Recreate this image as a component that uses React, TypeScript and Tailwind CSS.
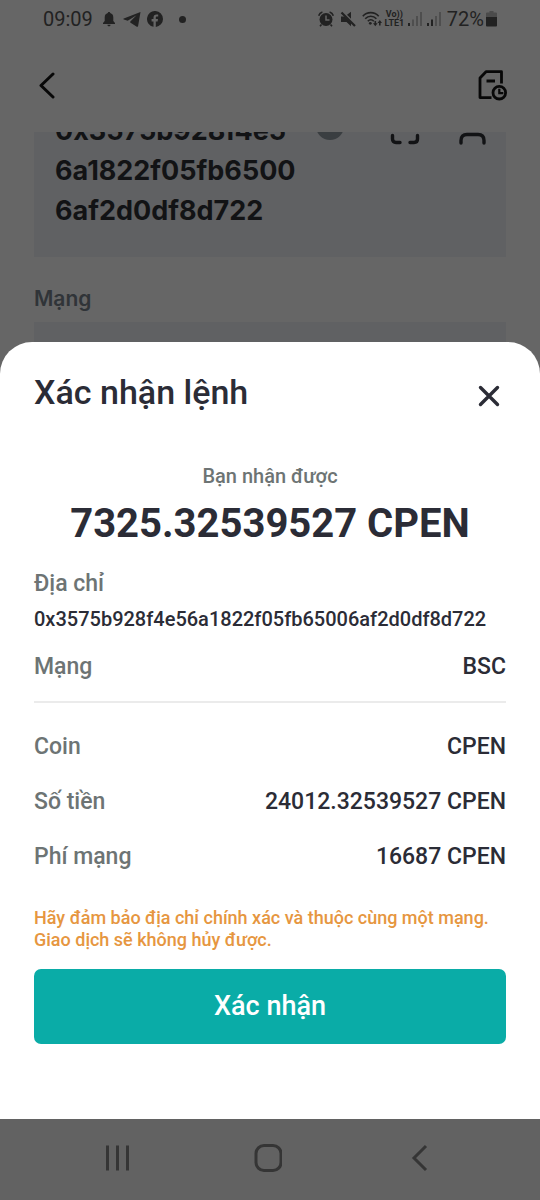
const details = [
  { label: 'Coin', value: 'CPEN' },
  { label: 'Số tiền', value: '24012.32539527 CPEN' },
  { label: 'Phí mạng', value: '16687 CPEN' },
];

function StatusBar() {
  return (
    <div className="flex h-[38px] items-center justify-between px-[43px] text-[#222222]">
      <div className="flex items-center">
        <span className="text-[20px] leading-6">09:09</span>
        <svg className="ml-2.5 h-4 w-3" viewBox="0 0 12 16" fill="currentColor">
          <path d="M6 1c.8 0 1.2.5 1.2 1.1C9.300 2.700 10.300 4.300 10.300 6.500V10L12 12v.9H0V12l1.700-2V6.500c0-2.200 1-3.800 3.100-4.400C4.800 1.500 5.200 1 6 1zM4.500 13.700h3C7.500 14.700 6.900 15.200 6 15.200s-1.500-.5-1.500-1.500z" />
        </svg>
        <svg className="ml-2 h-4 w-[18px]" viewBox="0 0 18 16" fill="currentColor">
          <path d="M17.500 1 .8 7.400c-.7.3-.6 1 .1 1.200l3.800 1.100L13.500 4.300 7.300 10.600l-.1.900 6.200 4.100c.9.500 1.500.2 1.700-.7L17.500 1z" />
        </svg>
        <svg className="ml-1.5 h-4 w-4" viewBox="0 0 16 16" fill="currentColor">
          <path d="M16 8A8 8 0 1 0 6.500 15.850V10.500H4.600V8.100h1.900V6.600c0-2.100 1.200-3.200 3-3.200.7 0 1.500.1 1.700.2v2H10c-.9 0-1.200.5-1.200 1.200v1.300h2.200l-.4 2.400H8.800v5.450A8 8 0 0 0 16 8z" />
        </svg>
        <span className="ml-4 h-[7px] w-[7px] rounded-full bg-[#222222]" />
      </div>

      <div className="flex items-center">
        <svg className="h-4 w-4" viewBox="0 0 16 16" fill="none" stroke="currentColor">
          <circle cx="8" cy="8.500" r="6.500" fill="currentColor" stroke="none" />
          <path d="M.7 4.800C1.200 3 2.500 1.500 4.400 1M15.300 4.800C14.800 3 13.500 1.500 11.600 1M3.500 13.500 2 15.300M12.500 13.500 14 15.300" strokeWidth="1.600" />
          <path d="M8 4.500V9h3.500" stroke="#666666" strokeWidth="1.500" />
        </svg>
        <svg className="ml-1.5 h-4 w-4" viewBox="0 0 16 16" fill="currentColor">
          <path d="M1 5.500h3.500L11 12v3.300L6.500 11H1zM7 3.800 11 .8v7z" />
          <path d="M1.500 1.500 15 15" stroke="currentColor" strokeWidth="2.200" />
        </svg>
        <svg className="ml-1.5 h-4 w-5" viewBox="0 0 20 16" fill="none" stroke="currentColor" strokeWidth="1.600">
          <path d="M.8 5.200C5 .4 12.500.4 16.700 5.200M3.200 7.800c3.200-3.500 8-3.500 11.200 0M5.800 10.200c1.800-1.900 4.200-1.900 6 0" />
          <circle cx="8.300" cy="12.300" r="1.400" fill="currentColor" stroke="none" />
          <path d="M13.300 10v3M17.800 14.500v-3" />
          <path d="M11 12.300h4.600L13.300 15.300zM15.500 12h4.500l-2.200-3z" fill="currentColor" stroke="none" />
        </svg>
        <span className="ml-0.5 flex w-[21px] flex-col items-center text-[9px] font-bold leading-[9px]">
          <span>Vo))</span>
          <span>LTE1</span>
        </span>
        <svg className="ml-[3px] h-4 w-3.5" viewBox="0 0 14 16" fill="currentColor">
          <path d="M0 12h2v3H0z" />
          <path d="M4 8.500h2V15H4zM8 5h2v10H8zM12 1h2v14h-2z" opacity=".35" />
        </svg>
        <svg className="ml-[5px] h-4 w-3.5" viewBox="0 0 14 16" fill="currentColor">
          <path d="M0 12h2v3H0zM4 8.500h2V15H4z" />
          <path d="M8 5h2v10H8zM12 1h2v14h-2z" opacity=".35" />
        </svg>
        <span className="ml-1.5 text-[20px] leading-6">72%</span>
        <svg className="ml-0.5 h-4 w-[11px]" viewBox="0 0 11 16" fill="currentColor">
          <path d="M3.500 0h4v1.500H10A1 1 0 0 1 11 2.500V6H0V2.500a1 1 0 0 1 1-1h2.500z" opacity=".4" />
          <path d="M0 6h11v8.500a1 1 0 0 1-1 1H1a1 1 0 0 1-1-1z" />
        </svg>
      </div>
    </div>
  );
}

function WithdrawPage() {
  return (
    <div className="col-start-1 row-start-1">
      <StatusBar />
      <header className="flex h-[94px] items-center justify-between px-8 text-[#080808]">
        <button type="button" aria-label="Quay lại" className="flex h-8 w-8 items-center">
          <svg className="h-7 w-7" viewBox="0 0 28 28" fill="none" stroke="currentColor" strokeWidth="3" strokeLinecap="round" strokeLinejoin="round">
            <path d="M21 3 9 14.500 21 26" />
          </svg>
        </button>
        <button type="button" aria-label="Lịch sử" className="flex h-8 w-8 items-center justify-center">
          <svg className="h-8 w-8" viewBox="0 0 32 32" fill="none" stroke="currentColor" strokeWidth="2.800">
            <path d="M15.500 28.600H4V9l6-6.300h15.500V14.500M10.500 12h8.500" strokeLinejoin="round" />
            <circle cx="23.300" cy="23.700" r="6.300" />
            <path d="M23.300 19.800v4.400h4" strokeWidth="2.200" />
          </svg>
        </button>
      </header>

      <main className="px-[34px]">
        {/* scrolled address field, its first line is cut by the header */}
        <div className="flex h-[125px] justify-between overflow-hidden bg-[#606163] pl-[21px] pr-5">
          <p className="w-[242px] shrink-0 self-end pb-[26px] font-['Inter','Liberation_Sans',sans-serif] text-[27px] font-bold leading-10 text-[#121315]">
            0x3575b928f4e5<br />
            6a1822f05fb6500<br />
            6af2d0df8d722
          </p>
          <svg className="h-4 w-[170px] shrink-0" viewBox="0 0 170 16" fill="none" stroke="#121315" strokeWidth="3.400" strokeLinecap="round">
            <circle cx="14" cy="-6" r="14" fill="#3a3e41" stroke="none" />
            <path d="M76.500 3.500V7q0 3.500 3.500 3.500h4M94 10.500h4q3.500 0 3.500-3.500V3.500" />
            <path d="M145 11V8.500q0-6 6-6h11q6 0 6 6V11" />
          </svg>
        </div>
        <p className="mt-7 font-['Inter','Liberation_Sans',sans-serif] text-[21px] font-semibold leading-7 text-[#303438]">Mạng</p>
        <div className="mt-[9px] h-[75px] bg-[#606163]" />
      </main>
    </div>
  );
}

function ConfirmSheet() {
  return (
    <section
      role="dialog"
      aria-labelledby="sheet-title"
      className="col-start-1 row-start-1 mt-[342px] self-end rounded-t-[32px] bg-white px-[34px] pb-[75px] pt-[30px] text-[#2b2c36]"
    >
      <div className="flex items-center justify-between">
        <h1 id="sheet-title" className="text-[34px] font-medium leading-10">Xác nhận lệnh</h1>
        <button type="button" aria-label="Đóng" className="mt-2 flex h-8 w-[34px] items-center justify-center">
          <svg className="h-6 w-6" viewBox="0 0 24 24" fill="none" stroke="currentColor" strokeWidth="3.400" strokeLinecap="round">
            <path d="m3.500 3.500 17 17M20.500 3.500l-17 17" />
          </svg>
        </button>
      </div>

      <p className="mt-[52px] text-center text-[20px] font-medium leading-6 text-[#6d7474]">Bạn nhận được</p>
      <p className="mt-3 text-center text-[40px] font-bold leading-[48px]">7325.32539527 CPEN</p>

      <dl className="text-[23px] font-medium leading-7">
        <dt className="mt-[22px] text-[#6d7474]">Địa chỉ</dt>
        <dd className="mt-[7px] break-all text-[20px] leading-7">0x3575b928f4e56a1822f05fb65006af2d0df8d722</dd>
        <div className="mt-5 flex justify-between border-b-2 border-[#ebebeb] pb-5">
          <dt className="text-[#6d7474]">Mạng</dt>
          <dd>BSC</dd>
        </div>
        <div className="mt-[30px] flex flex-col gap-[27px]">
          {details.map((row) => (
            <div key={row.label} className="flex justify-between">
              <dt className="text-[#6d7474]">{row.label}</dt>
              <dd>{row.value}</dd>
            </div>
          ))}
        </div>
      </dl>

      <p className="mt-9 text-[18px] font-medium leading-[22px] text-[#e69640]">
        Hãy đảm bảo địa chỉ chính xác và thuộc cùng một mạng. Giao dịch sẽ không hủy được.
      </p>
      <button type="button" className="mt-[18px] h-[75px] w-full rounded-[7px] bg-[#0aaca7] text-[27px] font-medium text-white">
        Xác nhận
      </button>
    </section>
  );
}

function NavigationBar() {
  return (
    <nav className="flex h-[81px] items-center justify-between bg-[#626262] pb-1 pl-[103px] pr-[108px] text-[#353535]">
      <button type="button" aria-label="Gần đây">
        <svg className="h-7 w-7" viewBox="0 0 28 28" fill="none" stroke="currentColor" strokeWidth="3">
          <path d="M4.500 1.500v25M14.500 1.500v25M24.500 1.500v25" />
        </svg>
      </button>
      <button type="button" aria-label="Trang chủ">
        <svg className="h-7 w-7" viewBox="0 0 28 28" fill="none" stroke="currentColor" strokeWidth="3">
          <rect x="2" y="1.500" width="25" height="25" rx="8" />
        </svg>
      </button>
      <button type="button" aria-label="Trở về">
        <svg className="h-7 w-7" viewBox="0 0 28 28" fill="none" stroke="currentColor" strokeWidth="3">
          <path d="M22 2 10 14l12 12" />
        </svg>
      </button>
    </nav>
  );
}

export default function App() {
  return (
    <div className="grid min-h-screen grid-cols-1 grid-rows-[1fr_auto] bg-[#666666] font-['Roboto','Liberation_Sans',sans-serif]">
      <WithdrawPage />
      <ConfirmSheet />
      <NavigationBar />
    </div>
  );
}
